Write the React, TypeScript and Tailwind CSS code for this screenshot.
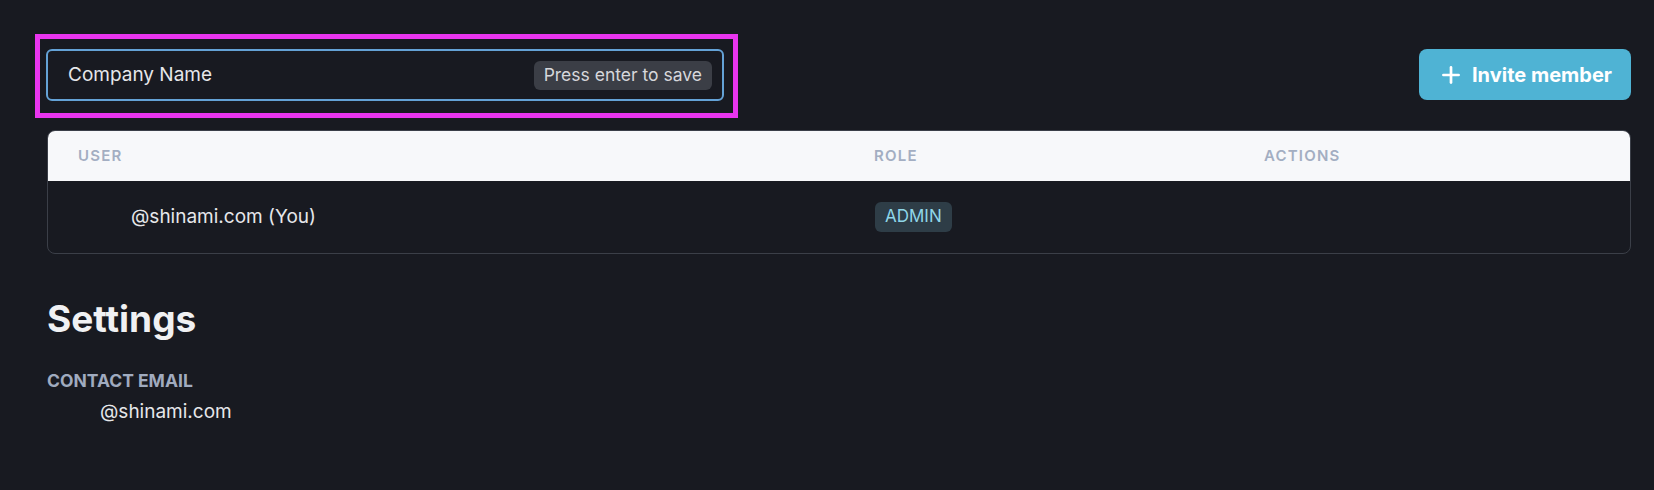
import { Plus } from "lucide-react";

export default function App() {
  return (
    <div className="min-h-screen bg-[#181a21] pl-[47px] pr-[23px] pt-[34px] font-['Inter',sans-serif] text-[#e6e7ea]">
      {/* Header: company name + invite */}
      <div className="flex items-start justify-between">
        <div className="-ml-[12px] border-[5px] border-[#e935ef] pb-[12px] pl-[6px] pr-[9px] pt-[10px]">
          <div className="flex h-[52px] w-[678px] items-center justify-between rounded-md border-2 border-[#64a2d6] pl-[20px] pr-[10px]">
            <span className="text-[19px]">Company Name</span>
            <span className="flex h-[29px] items-center rounded-md bg-[#3b3e46] px-[10px] text-[17.5px] text-[#d6d7db]">
              Press enter to save
            </span>
          </div>
        </div>
        <button className="mt-[15px] flex h-[51px] w-[212px] items-center justify-center gap-[8px] rounded-lg bg-[#4fb3d4] text-[20px] font-bold text-white">
          <Plus size={26} strokeWidth={2.5} />
          Invite member
        </button>
      </div>

      {/* Members table */}
      <div className="mt-[12px] overflow-hidden rounded-lg border border-[#3b3f48]">
        <div className="grid h-[50px] grid-cols-[794px_390px_1fr] items-center bg-[#f7f8fa] text-[15px] font-semibold uppercase tracking-[0.08em] text-[#a3aec2]">
          <div className="pl-[30px]">User</div>
          <div className="pl-[32px]">Role</div>
          <div className="pl-[32px]">Actions</div>
        </div>
        <div className="grid h-[72px] grid-cols-[794px_390px_1fr] items-center">
          <div className="pl-[83px] text-[19px]">@shinami.com (You)</div>
          <div className="pl-[33px]">
            <span className="inline-flex h-[30px] items-center rounded-md bg-[#2e3d47] px-[10px] text-[17px] text-[#8fd6e8]">
              ADMIN
            </span>
          </div>
          <div />
        </div>
      </div>

      {/* Settings */}
      <h2 className="mt-[44px] text-[37px] font-bold leading-[42px] text-[#f0f1f3]">Settings</h2>
      <div className="mt-[29px] text-[17.5px] font-bold leading-6 text-[#a0abbf]">CONTACT EMAIL</div>
      <div className="mt-[5px] pl-[53px] text-[19px] leading-7">@shinami.com</div>
    </div>
  );
}
